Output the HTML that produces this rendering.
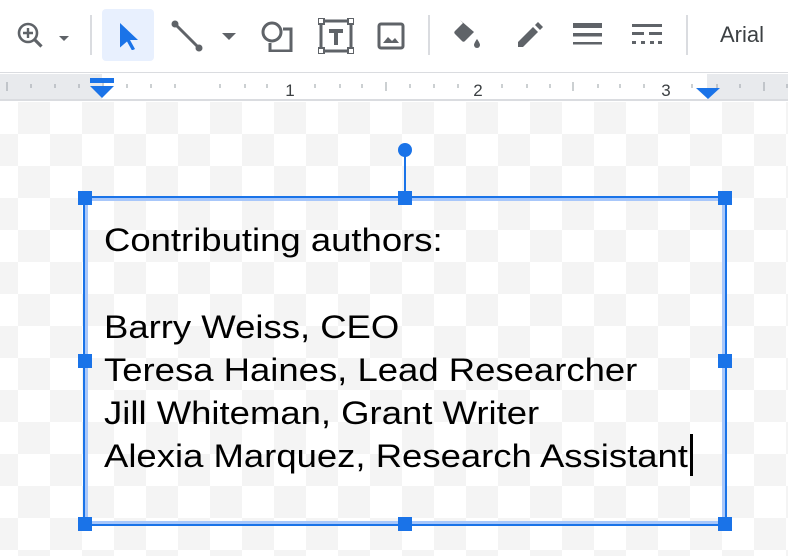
<!DOCTYPE html>
<html><head><style>
*{margin:0;padding:0;box-sizing:border-box}
body{width:788px;height:556px;overflow:hidden;background:#fff;font-family:"Liberation Sans",Arial,sans-serif;position:relative}
.tb{position:absolute;left:0;top:0;width:788px;height:73px;background:#fff;border-bottom:1px solid #dadce0}
.ic{position:absolute}
.sep{position:absolute;top:15px;width:2px;height:40px;background:#dadce0}
.ruler{position:absolute;left:0;top:74px;width:788px;height:27px;background:#fff;border-bottom:2px solid #dadce0}
.canvas{position:absolute;left:0;top:102px;width:788px;height:454px;
background-color:#fff;
background-image:linear-gradient(45deg,#f4f4f4 25%,transparent 25%,transparent 75%,#f4f4f4 75%),linear-gradient(45deg,#f4f4f4 25%,transparent 25%,transparent 75%,#f4f4f4 75%);
background-size:64px 64px;background-position:50px 0px,82px 32px}
.box{position:absolute;left:83px;top:196px;width:644px;height:330px;border:2px solid #1a73e8;box-shadow:inset 0 0 0 3px #a8c7fa}
.h{position:absolute;width:14px;height:14px;background:#1a73e8}
.txt{position:absolute;left:104px;top:219px;font-size:32px;line-height:43.3px;color:#000;white-space:pre;transform:scaleX(1.14);transform-origin:0 0}
</style></head><body>
<div class="tb">
<svg class="ic" style="left:14px;top:20px" width="60" height="32" viewBox="0 0 60 32"><circle cx="14" cy="13" r="9" fill="none" stroke="#5f6368" stroke-width="2.6"/><path d="M14 8v10M9 13h10" stroke="#5f6368" stroke-width="2.4"/><path d="M20.5 19.5l7 7" stroke="#5f6368" stroke-width="3.2"/><path d="M45 16h10l-5 5z" fill="#5f6368"/></svg>
<div class="sep" style="left:90px"></div>
<div style="position:absolute;left:102px;top:9px;width:52px;height:52px;background:#e8f0fe;border-radius:4px"></div>
<svg class="ic" style="left:118px;top:22px" width="24" height="28" viewBox="0 0 24 28"><path d="M2 1l18 17h-8l5 9-3 1.5-5-9-7 6z" fill="#1a73e8"/></svg>
<svg class="ic" style="left:170px;top:20px" width="72" height="32" viewBox="0 0 72 32"><path d="M5 4l24 24" stroke="#5f6368" stroke-width="3"/><circle cx="5" cy="4" r="3.5" fill="#5f6368"/><circle cx="29" cy="28" r="3.5" fill="#5f6368"/><path d="M52 13h14l-7 7z" fill="#5f6368"/></svg>
<svg class="ic" style="left:260px;top:20px" width="34" height="32" viewBox="0 0 34 32"><circle cx="12" cy="12" r="9" fill="none" stroke="#5f6368" stroke-width="3"/><path d="M23 9h8v22H10v-8" fill="none" stroke="#5f6368" stroke-width="3"/></svg>
<svg class="ic" style="left:318px;top:18px" width="36" height="36" viewBox="0 0 36 36"><rect x="3" y="3" width="30" height="30" fill="none" stroke="#5f6368" stroke-width="3"/><path d="M11 11h14v4h-5v12h-4V15h-5z" fill="#5f6368"/><rect x="0" y="0" width="6" height="6" fill="#fff" stroke="#5f6368" stroke-width="2"/><rect x="30" y="0" width="6" height="6" fill="#fff" stroke="#5f6368" stroke-width="2"/><rect x="0" y="30" width="6" height="6" fill="#fff" stroke="#5f6368" stroke-width="2"/><rect x="30" y="30" width="6" height="6" fill="#fff" stroke="#5f6368" stroke-width="2"/></svg>
<svg class="ic" style="left:377px;top:22px" width="28" height="28" viewBox="0 0 28 28"><rect x="2" y="2" width="24" height="24" rx="2" fill="none" stroke="#5f6368" stroke-width="3"/><path d="M6 21l5-6 4 4 3-3 4 5z" fill="#5f6368"/></svg>
<div class="sep" style="left:428px"></div>
<svg class="ic" style="left:450px;top:18px" width="34" height="32" viewBox="0 0 34 32"><path d="M10 2l3 3-8 8c-1 1-1 2 0 3l7 7c1 1 2 1 3 0l9-9z" fill="#5f6368"/><path d="M27 21c0 0-3 4-3 6a3 3 0 006 0c0-2-3-6-3-6z" fill="#5f6368"/></svg>
<svg class="ic" style="left:516px;top:20px" width="28" height="28" viewBox="0 0 28 28"><path d="M2 22v5h5L22 12l-5-5z" fill="#5f6368"/><path d="M19 5l3-3 5 5-3 3z" fill="#5f6368"/></svg>
<svg class="ic" style="left:572px;top:22px" width="32" height="26" viewBox="0 0 32 26"><rect x="1" y="1" width="29" height="5" fill="#5f6368"/><rect x="1" y="11" width="29" height="3.5" fill="#5f6368"/><rect x="1" y="20" width="29" height="2.5" fill="#5f6368"/></svg>
<svg class="ic" style="left:632px;top:24px" width="32" height="22" viewBox="0 0 32 22"><rect x="0" y="0" width="30" height="3" fill="#5f6368"/><rect x="0" y="8" width="12" height="3" fill="#5f6368"/><rect x="17" y="8" width="13" height="3" fill="#5f6368"/><rect x="0" y="17" width="4" height="3" fill="#5f6368"/><rect x="9" y="17" width="4" height="3" fill="#5f6368"/><rect x="18" y="17" width="4" height="3" fill="#5f6368"/><rect x="26" y="17" width="4" height="3" fill="#5f6368"/></svg>
<div class="sep" style="left:686px"></div>
<div style="position:absolute;left:720px;top:22px;font-size:22px;color:#3c4043">Arial</div>
</div>
<div class="ruler">
<div style="position:absolute;left:0;top:0;width:102px;height:25px;background:#e8eaed"></div>
<div style="position:absolute;left:707px;top:0;width:81px;height:25px;background:#e8eaed"></div>
<svg style="position:absolute;left:0;top:0" width="788" height="25">
<g stroke="#9aa0a6" stroke-width="1">
<path d="M7 8v9M31 10v4M55 10v4M79 10v4M103 8v9M127 10v4M151 10v4M175 10v4M220 10v4M245 10v4M267 10v4M315 10v4M340 10v4M362 10v4M386 8v9M410 10v4M434 10v4M458 10v4M502 10v4M527 10v4M550 10v4M573 8v9M598 10v4M620 10v4M644 10v4M692 10v4M717 10v4M740 10v4M764 8v9M787 10v4"/>
</g>
<text x="290" y="22" font-size="17" fill="#3c4043" text-anchor="middle" font-family="Liberation Sans">1</text>
<text x="478" y="22" font-size="17" fill="#3c4043" text-anchor="middle" font-family="Liberation Sans">2</text>
<text x="666" y="22" font-size="17" fill="#3c4043" text-anchor="middle" font-family="Liberation Sans">3</text>
<rect x="90" y="4" width="24" height="5" fill="#1a73e8"/>
<path d="M90 12h24l-12 12z" fill="#1a73e8"/>
<path d="M696 14h24l-12 11z" fill="#1a73e8"/>
</svg>
</div>
<div class="canvas"></div>
<div style="position:absolute;left:404px;top:156px;width:2px;height:42px;background:#1a73e8"></div>
<div style="position:absolute;left:398px;top:143px;width:14px;height:14px;border-radius:50%;background:#1a73e8"></div>
<div class="box"></div>
<div class="h" style="left:78px;top:191px"></div>
<div class="h" style="left:398px;top:191px"></div>
<div class="h" style="left:718px;top:191px"></div>
<div class="h" style="left:78px;top:354px"></div>
<div class="h" style="left:718px;top:354px"></div>
<div class="h" style="left:78px;top:517px"></div>
<div class="h" style="left:398px;top:517px"></div>
<div class="h" style="left:718px;top:517px"></div>
<div class="txt">Contributing authors:

Barry Weiss, CEO
Teresa Haines, Lead Researcher
Jill Whiteman, Grant Writer
Alexia Marquez, Research Assistant</div>
<div style="position:absolute;left:690px;top:434px;width:2.5px;height:42px;background:#000"></div>
</body></html>
